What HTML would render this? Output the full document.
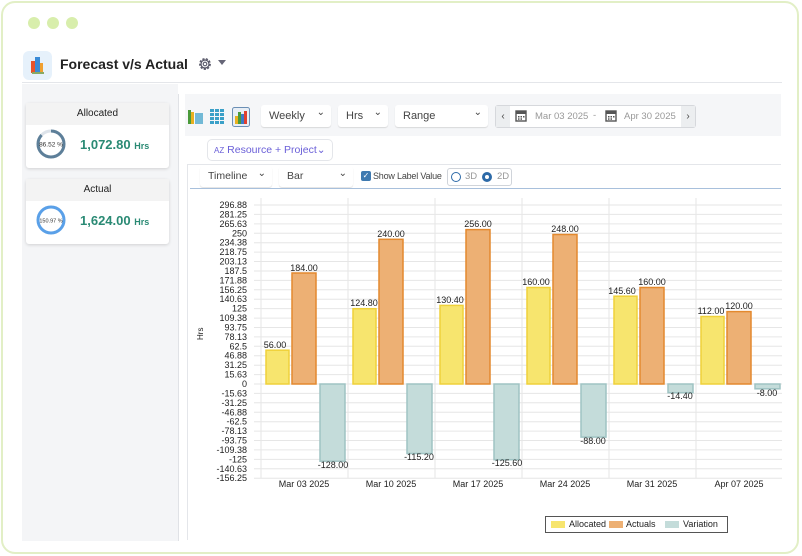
<!DOCTYPE html>
<html><head><meta charset="utf-8"><style>
*{box-sizing:border-box;margin:0;padding:0}
body{width:802px;height:556px;background:#fff;font-family:"Liberation Sans",sans-serif;position:relative;overflow:hidden;color:#333}
.abs{position:absolute}
.frame{left:1px;top:1px;width:798px;height:553px;border:2px solid #e2efc6;border-radius:14px;background:#fff}
.dot{width:12px;height:12px;border-radius:50%;background:#d8eeac;top:17px}
.side{left:22px;top:84px;width:156px;height:457px;background:#f4f5f7}
.card{background:#fff;box-shadow:0 1px 3px rgba(0,0,0,.15);border-radius:3px;left:26px;width:143px;height:65px}
.card .h{height:22px;background:#f3f3f3;text-align:center;font-size:10px;line-height:22px;color:#222}
.sel{background:#fff;border-radius:3px;box-shadow:0 1px 1px rgba(0,0,0,.12);font-size:11px;color:#444;padding-left:8px;line-height:22px;height:22px}
.sel:after{content:"⌄";position:absolute;right:6px;top:-3px;font-size:10px}
</style></head><body>
<div class="abs frame"></div>
<div class="abs dot" style="left:28px"></div>
<div class="abs dot" style="left:47px"></div>
<div class="abs dot" style="left:66px"></div>
<div class="abs" style="left:23px;top:51px;width:29px;height:29px;background:#e6f1fb;border-radius:6px"></div>
<svg class="abs" style="left:29px;top:55px" width="18" height="20"><rect x="2" y="6" width="4" height="12" fill="#e8532b"/><rect x="6" y="2" width="5" height="16" fill="#3a8ad6"/><rect x="11" y="8" width="3" height="10" fill="#f0a030"/><rect x="3" y="17" width="12" height="2" fill="#8a6"/></svg>
<div class="abs" style="left:60px;top:56px;font-size:14px;font-weight:bold;color:#222">Forecast v/s Actual</div>
<svg class="abs" style="left:197px;top:56px" width="16" height="16" viewBox="0 0 16 16"><circle cx="8" cy="8" r="5.2" fill="none" stroke="#556" stroke-width="1.4" stroke-dasharray="2.2 1.4"/><circle cx="8" cy="8" r="4" fill="none" stroke="#556" stroke-width="1.2"/><circle cx="8" cy="8" r="1.8" fill="none" stroke="#556" stroke-width="1.1"/></svg>
<div class="abs" style="left:218px;top:60px;border-left:4px solid transparent;border-right:4px solid transparent;border-top:5px solid #667"></div>
<div class="abs" style="left:22px;top:82px;width:760px;height:1px;background:#e4e6ea"></div>
<div class="abs side"></div>
<div class="abs" style="left:178px;top:94px;width:1px;height:447px;background:#e0e2e6"></div>
<div class="abs card" style="top:103px"><div class="h">Allocated</div>
<svg class="abs" style="left:9px;top:25px" width="32" height="32"><circle cx="16" cy="16" r="13" fill="none" stroke="#dde3ea" stroke-width="3"/><circle cx="16" cy="16" r="13" fill="none" stroke="#5d7f99" stroke-width="3" stroke-dasharray="70.7 81.7" transform="rotate(-90 16 16)"/><text x="16" y="18.5" font-size="6.5" text-anchor="middle" fill="#333" font-family="Liberation Sans">86.52 %</text></svg>
<div class="abs" style="left:54px;top:34px;font-size:13px;font-weight:bold;color:#2a8a74">1,072.80 <span style="font-size:9px">Hrs</span></div></div>
<div class="abs card" style="top:179px"><div class="h">Actual</div>
<svg class="abs" style="left:9px;top:25px" width="32" height="32"><circle cx="16" cy="16" r="13" fill="none" stroke="#5aa0e8" stroke-width="3"/><text x="16" y="18.5" font-size="5.5" text-anchor="middle" fill="#333" font-family="Liberation Sans">150.97 %</text></svg>
<div class="abs" style="left:54px;top:34px;font-size:13px;font-weight:bold;color:#2a8a74">1,624.00 <span style="font-size:9px">Hrs</span></div></div>
<div class="abs" style="left:185px;top:94px;width:596px;height:42px;background:#f5f6f8"></div>
<svg class="abs" style="left:187px;top:107px" width="64" height="20">
<rect x="1" y="3" width="3" height="14" fill="#4a9a3a"/><rect x="4" y="5" width="3" height="12" fill="#e8b020"/><rect x="8" y="6" width="8" height="11" fill="#3aa0c8" opacity=".7"/>
<g fill="#3aa0c8"><rect x="23" y="2" width="4" height="3"/><rect x="28" y="2" width="4" height="3"/><rect x="33" y="2" width="4" height="3"/><rect x="23" y="6" width="4" height="3"/><rect x="28" y="6" width="4" height="3"/><rect x="33" y="6" width="4" height="3"/><rect x="23" y="10" width="4" height="3"/><rect x="28" y="10" width="4" height="3"/><rect x="33" y="10" width="4" height="3"/><rect x="23" y="14" width="4" height="3"/><rect x="28" y="14" width="4" height="3"/><rect x="33" y="14" width="4" height="3"/></g>
<rect x="45.5" y="0.5" width="17" height="19" rx="2" fill="#e8eef5" stroke="#6b8fb5"/><rect x="48" y="9" width="3" height="8" fill="#e8b020"/><rect x="51" y="5" width="3" height="12" fill="#4a9a3a"/><rect x="54" y="7" width="3" height="10" fill="#3a7ac8"/><rect x="57" y="4" width="3" height="13" fill="#e04030"/></svg>
<div class="abs sel" style="left:261px;top:105px;width:70px">Weekly</div>
<div class="abs sel" style="left:338px;top:105px;width:50px">Hrs</div>
<div class="abs sel" style="left:395px;top:105px;width:93px">Range</div>
<div class="abs" style="left:495px;top:105px;width:201px;height:23px;border:1px solid #d6d8dc;border-radius:3px;background:#fff"></div>
<div class="abs" style="left:496px;top:106px;width:14px;height:21px;background:#eceef0;font-size:10px;text-align:center;line-height:21px;color:#444">‹</div>
<div class="abs" style="left:681px;top:106px;width:14px;height:21px;background:#eceef0;font-size:10px;text-align:center;line-height:21px;color:#444">›</div>
<svg class="abs" style="left:515px;top:109px" width="12" height="13"><rect x="1" y="2" width="10" height="10" fill="none" stroke="#555" stroke-width="1.4"/><rect x="1" y="2" width="10" height="3" fill="#555"/><g fill="#555"><rect x="3" y="7" width="1.5" height="1.5"/><rect x="5.5" y="7" width="1.5" height="1.5"/><rect x="8" y="7" width="1.5" height="1.5"/><rect x="3" y="9.3" width="1.5" height="1.5"/><rect x="5.5" y="9.3" width="1.5" height="1.5"/></g></svg>
<div class="abs" style="left:535px;top:111px;font-size:9.5px;color:#999">Mar 03 2025</div>
<div class="abs" style="left:593px;top:110px;font-size:9.5px;color:#999">-</div>
<svg class="abs" style="left:605px;top:109px" width="12" height="13"><rect x="1" y="2" width="10" height="10" fill="none" stroke="#555" stroke-width="1.4"/><rect x="1" y="2" width="10" height="3" fill="#555"/><g fill="#555"><rect x="3" y="7" width="1.5" height="1.5"/><rect x="5.5" y="7" width="1.5" height="1.5"/><rect x="8" y="7" width="1.5" height="1.5"/><rect x="3" y="9.3" width="1.5" height="1.5"/><rect x="5.5" y="9.3" width="1.5" height="1.5"/></g></svg>
<div class="abs" style="left:624px;top:111px;font-size:9.5px;color:#999">Apr 30 2025</div>
<div class="abs" style="left:207px;top:139px;width:126px;height:22px;border:1px solid #e4e6ea;border-radius:5px;font-size:10.5px;color:#6a5fd8;line-height:20px;padding-left:6px"><span style="font-size:8px">AZ</span> Resource + Project⌄</div>
<div class="abs" style="left:187px;top:164px;width:594px;height:1px;background:#e4e6ea"></div>
<div class="abs" style="left:187px;top:164px;width:1px;height:376px;background:#e4e6ea"></div>
<div class="abs sel" style="left:200px;top:166px;width:72px;padding-left:8px;font-size:10.5px;height:21px;line-height:21px">Timeline</div>
<div class="abs sel" style="left:279px;top:166px;width:74px;font-size:10.5px;height:21px;line-height:21px">Bar</div>
<div class="abs" style="left:361px;top:171px;width:10px;height:10px;background:#3f7ab0;border-radius:2px;color:#fff;font-size:8px;line-height:10px;text-align:center">✓</div>
<div class="abs" style="left:373px;top:171px;font-size:9px;color:#444;letter-spacing:-0.2px">Show Label Value</div>
<div class="abs" style="left:447px;top:168px;width:65px;height:18px;border:1px solid #d0d4da;border-radius:3px"></div>
<div class="abs" style="left:451px;top:172px;width:10px;height:10px;border:1.5px solid #2d6aa8;border-radius:50%"></div>
<div class="abs" style="left:465px;top:171px;font-size:9.5px;color:#999">3D</div>
<div class="abs" style="left:482px;top:172px;width:10px;height:10px;border:3px solid #2d6aa8;border-radius:50%"></div>
<div class="abs" style="left:497px;top:171px;font-size:9.5px;color:#999">2D</div>
<div class="abs" style="left:190px;top:188px;width:591px;height:1px;background:#a8c0dc"></div>
<svg class="abs" style="left:0;top:0" width="802" height="556" font-family="Liberation Sans, sans-serif">
<g stroke="#e6e6e6" stroke-width="1">
<line x1="254" x2="782" y1="205" y2="205"/><line x1="254" x2="782" y1="214.4" y2="214.4"/><line x1="254" x2="782" y1="223.9" y2="223.9"/><line x1="254" x2="782" y1="233.3" y2="233.3"/><line x1="254" x2="782" y1="242.7" y2="242.7"/><line x1="254" x2="782" y1="252.1" y2="252.1"/><line x1="254" x2="782" y1="261.5" y2="261.5"/><line x1="254" x2="782" y1="271" y2="271"/><line x1="254" x2="782" y1="280.4" y2="280.4"/><line x1="254" x2="782" y1="289.8" y2="289.8"/><line x1="254" x2="782" y1="299.2" y2="299.2"/><line x1="254" x2="782" y1="308.6" y2="308.6"/><line x1="254" x2="782" y1="318.1" y2="318.1"/><line x1="254" x2="782" y1="327.5" y2="327.5"/><line x1="254" x2="782" y1="336.9" y2="336.9"/><line x1="254" x2="782" y1="346.3" y2="346.3"/><line x1="254" x2="782" y1="355.7" y2="355.7"/><line x1="254" x2="782" y1="365.2" y2="365.2"/><line x1="254" x2="782" y1="374.6" y2="374.6"/><line x1="254" x2="782" y1="384" y2="384"/><line x1="254" x2="782" y1="393.4" y2="393.4"/><line x1="254" x2="782" y1="402.8" y2="402.8"/><line x1="254" x2="782" y1="412.3" y2="412.3"/><line x1="254" x2="782" y1="421.7" y2="421.7"/><line x1="254" x2="782" y1="431.1" y2="431.1"/><line x1="254" x2="782" y1="440.5" y2="440.5"/><line x1="254" x2="782" y1="449.9" y2="449.9"/><line x1="254" x2="782" y1="459.4" y2="459.4"/><line x1="254" x2="782" y1="468.8" y2="468.8"/><line x1="254" x2="782" y1="478.2" y2="478.2"/>
<line x1="261" x2="261" y1="198" y2="478"/><line x1="348" x2="348" y1="198" y2="478"/><line x1="435" x2="435" y1="198" y2="478"/><line x1="522" x2="522" y1="198" y2="478"/><line x1="609" x2="609" y1="198" y2="478"/><line x1="696" x2="696" y1="198" y2="478"/>
</g>
<g font-size="9" fill="#222" text-anchor="end">
<text x="247" y="208">296.88</text><text x="247" y="217.4">281.25</text><text x="247" y="226.9">265.63</text><text x="247" y="236.3">250</text><text x="247" y="245.7">234.38</text><text x="247" y="255.1">218.75</text><text x="247" y="264.5">203.13</text><text x="247" y="274">187.5</text><text x="247" y="283.4">171.88</text><text x="247" y="292.8">156.25</text><text x="247" y="302.2">140.63</text><text x="247" y="311.6">125</text><text x="247" y="321.1">109.38</text><text x="247" y="330.5">93.75</text><text x="247" y="339.9">78.13</text><text x="247" y="349.3">62.5</text><text x="247" y="358.7">46.88</text><text x="247" y="368.2">31.25</text><text x="247" y="377.6">15.63</text><text x="247" y="387">0</text><text x="247" y="396.4">-15.63</text><text x="247" y="405.8">-31.25</text><text x="247" y="415.3">-46.88</text><text x="247" y="424.7">-62.5</text><text x="247" y="434.1">-78.13</text><text x="247" y="443.5">-93.75</text><text x="247" y="452.9">-109.38</text><text x="247" y="462.4">-125</text><text x="247" y="471.8">-140.63</text><text x="247" y="481.2">-156.25</text>
</g>
<text x="0" y="0" font-size="8" fill="#222" transform="translate(203 340) rotate(-90)">Hrs</text>
<g stroke-width="1.5">
<g fill="#f7e56e" stroke="#efd13a">
<rect x="266" y="350.2" width="23" height="33.8"/><rect x="353" y="308.7" width="23" height="75.3"/><rect x="440" y="305.4" width="23" height="78.6"/><rect x="527" y="287.5" width="23" height="96.5"/><rect x="614" y="296.2" width="23" height="87.8"/><rect x="701" y="316.5" width="23" height="67.5"/></g>
<g fill="#edb074" stroke="#e3892e">
<rect x="292" y="273" width="24" height="111"/><rect x="379" y="239.3" width="24" height="144.7"/><rect x="466" y="229.6" width="24" height="154.4"/><rect x="553" y="234.5" width="24" height="149.5"/><rect x="640" y="287.5" width="24" height="96.5"/><rect x="727" y="311.6" width="24" height="72.4"/></g>
<g fill="#c4dcda" stroke="#9fc3c3">
<rect x="320" y="384" width="25" height="77.2"/><rect x="407" y="384" width="25" height="69.5"/><rect x="494" y="384" width="25" height="75.7"/><rect x="581" y="384" width="25" height="53.1"/><rect x="668" y="384" width="25" height="8.7"/><rect x="755" y="384" width="25" height="4.8"/></g>
</g>
<g font-size="9" fill="#222" text-anchor="middle">
<text x="275" y="348">56.00</text><text x="304" y="271">184.00</text><text x="333" y="468">-128.00</text>
<text x="364" y="306">124.80</text><text x="391" y="237">240.00</text><text x="419" y="460">-115.20</text>
<text x="450" y="303">130.40</text><text x="478" y="227">256.00</text><text x="507" y="466">-125.60</text>
<text x="536" y="285">160.00</text><text x="565" y="232">248.00</text><text x="593" y="444">-88.00</text>
<text x="622" y="294">145.60</text><text x="652" y="285">160.00</text><text x="680" y="399">-14.40</text>
<text x="711" y="314">112.00</text><text x="739" y="309">120.00</text><text x="767" y="396">-8.00</text>
<text x="304" y="487">Mar 03 2025</text><text x="391" y="487">Mar 10 2025</text><text x="478" y="487">Mar 17 2025</text><text x="565" y="487">Mar 24 2025</text><text x="652" y="487">Mar 31 2025</text><text x="739" y="487">Apr 07 2025</text>
</g>
<rect x="545.5" y="516.5" width="182" height="16" fill="#fff" stroke="#555"/>
<rect x="551" y="521" width="14" height="7" fill="#f7e56e"/><text x="569" y="527" font-size="9" fill="#222">Allocated</text>
<rect x="609" y="521" width="14" height="7" fill="#edb074"/><text x="626" y="527" font-size="9" fill="#222">Actuals</text>
<rect x="665" y="521" width="14" height="7" fill="#c4dcda"/><text x="683" y="527" font-size="9" fill="#222">Variation</text>
</svg>
</body></html>
